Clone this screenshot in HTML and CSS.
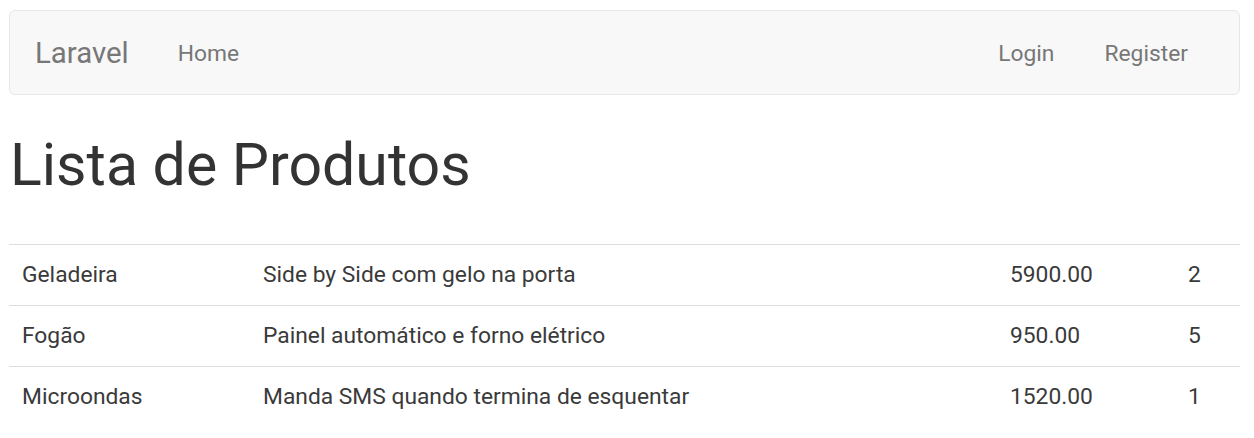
FILE: index.html
```html
<!DOCTYPE html>
<html lang="pt">
<head>
<meta charset="utf-8">
<title>Lista de Produtos</title>
<link rel="stylesheet" href="styles.css">
</head>
<body>
<div class="page">
  <nav class="navbar">
    <a class="brand" href="#">Laravel</a>
    <ul class="nav">
      <li><a href="#">Home</a></li>
    </ul>
    <ul class="nav nav-right">
      <li><a href="#">Login</a></li>
      <li><a href="#">Register</a></li>
    </ul>
  </nav>

  <h1 class="title">Lista de Produtos</h1>

  <table class="table">
    <colgroup>
      <col class="c-name">
      <col class="c-desc">
      <col class="c-price">
      <col class="c-qty">
    </colgroup>
    <tbody>
      <tr><td>Geladeira</td><td>Side by Side com gelo na porta</td><td>5900.00</td><td>2</td></tr>
      <tr><td>Fogão</td><td>Painel automático e forno elétrico</td><td>950.00</td><td>5</td></tr>
      <tr><td>Microondas</td><td>Manda SMS quando termina de esquentar</td><td>1520.00</td><td>1</td></tr>
    </tbody>
  </table>
</div>
</body>
</html>
```

FILE: styles.css
```css
html, body {
  margin: 0;
  padding: 0;
  background: #ffffff;
}

body {
  font-family: Roboto, "Liberation Sans", Arial, sans-serif;
  color: #333333;
}

.page {
  padding: 10px 14px 0 9px;
}

.navbar {
  display: flex;
  align-items: stretch;
  height: 83px;
  background: #f8f8f8;
  border: 1px solid #e7e7e7;
  border-radius: 6px;
  box-sizing: content-box;
}

.brand {
  display: block;
  padding: 2px 24px 0 25px;
  font-size: 29.4px;
  line-height: 81px;
  color: #777777;
  text-decoration: none;
}

.nav {
  display: flex;
  list-style: none;
  margin: 0;
  padding: 0;
}

.nav-right {
  margin-left: auto;
  margin-right: 26px;
}

.nav a {
  display: block;
  padding: 26px 25px 23px 25px;
  font-size: 22.8px;
  line-height: 34px;
  color: #777777;
  text-decoration: none;
}

.title {
  margin: 37px 0 47px 0;
  padding-left: 1px;
  font-size: 59px;
  line-height: 65px;
  font-weight: 400;
  color: #333333;
}

.table {
  width: 100%;
  border-collapse: collapse;
  table-layout: fixed;
}

.c-name { width: 241px; }
.c-desc { width: 747px; }
.c-price { width: 178px; }
.c-qty { width: 65px; }

.table td {
  padding: 13px;
  font-size: 22.8px;
  line-height: 34px;
  border-top: 1px solid #dddddd;
  color: #3a3a3a;
  white-space: nowrap;
}
```
